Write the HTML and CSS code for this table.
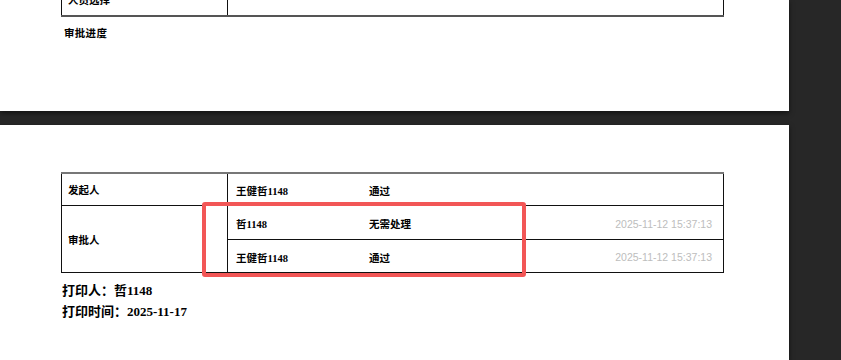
FILE: index.html
```html
<!DOCTYPE html>
<html lang="zh">
<head>
<meta charset="utf-8">
<link rel="stylesheet" href="styles.css">
</head>
<body>
<div class="viewer">
  <section class="page page-top">
    <table class="grid grid-top">
      <tr>
        <td class="label">人员选择</td>
        <td></td>
      </tr>
    </table>
    <div class="section-title">审批进度</div>
  </section>
  <section class="page page-bottom">
    <table class="grid grid-flow">
      <tr class="r1">
        <td class="label label-first">发起人</td>
        <td class="entry">
          <div class="entry-row"><span>王健哲1148</span><span>通过</span><span class="time"></span></div>
        </td>
      </tr>
      <tr class="r2">
        <td class="label" rowspan="2">审批人</td>
        <td class="entry">
          <div class="entry-row"><span>哲1148</span><span>无需处理</span><span class="time">2025-11-12 15:37:13</span></div>
        </td>
      </tr>
      <tr class="r3">
        <td class="entry">
          <div class="entry-row"><span>王健哲1148</span><span>通过</span><span class="time">2025-11-12 15:37:13</span></div>
        </td>
      </tr>
    </table>
    <div class="print-info">
      <div>打印人：哲1148</div>
      <div>打印时间：2025-11-17</div>
    </div>
    <div class="highlight"></div>
  </section>
</div>
</body>
</html>
```

FILE: styles.css
```css
html, body {
  margin: 0;
  padding: 0;
  background: #272727;
  height: 100%;
  overflow: hidden;
}

.viewer {
  width: 789px;
  display: flex;
  flex-direction: column;
  gap: 14px;
}

.page {
  background: #fff;
  box-shadow: 0 2px 5px rgba(0, 0, 0, 0.55);
  font-family: "Liberation Serif", "Noto Sans CJK SC", serif;
  font-weight: bold;
  color: #000;
  overflow: hidden;
}

.page-top {
  height: 111px;
}

.page-bottom {
  position: relative;
  height: 235px;
  padding-top: 47px;
  box-sizing: border-box;
}

.grid {
  border-collapse: collapse;
  margin-left: 61px;
  width: 663px;
  font-size: 10.5px;
}

.grid td {
  border: 1px solid #111;
  padding: 0;
  vertical-align: middle;
}

.grid .label {
  width: 159px;
  padding-left: 6px;
}

.grid-top {
  margin-top: -18px;
}

.grid-top td {
  height: 32px;
}

.grid-top tr td {
  border-bottom: 2px solid #555;
}

.section-title {
  margin: 10px 0 0 64px;
  font-size: 10.5px;
  line-height: 14px;
  letter-spacing: 0.3px;
}

.grid-flow tr:first-child td {
  border-top: 2px solid #777;
}

.r1 td { height: 31px; }
.r2 td { height: 33px; }
.r3 td { height: 32px; }

.label-first {
  padding-bottom: 3px;
}

.entry-row {
  display: grid;
  grid-template-columns: 133px 1fr auto;
  align-items: center;
  padding: 2px 11px 0 8px;
}

.time {
  font-family: "Liberation Sans", sans-serif;
  font-weight: normal;
  font-size: 10.5px;
  color: #bdbdbd;
}

.print-info {
  margin: 7px 0 0 62px;
  font-size: 13px;
  line-height: 21px;
}

.highlight {
  position: absolute;
  left: 202px;
  top: 77px;
  width: 324px;
  height: 75px;
  box-sizing: border-box;
  border: 4px solid #f25656;
  border-radius: 3px;
}
```
